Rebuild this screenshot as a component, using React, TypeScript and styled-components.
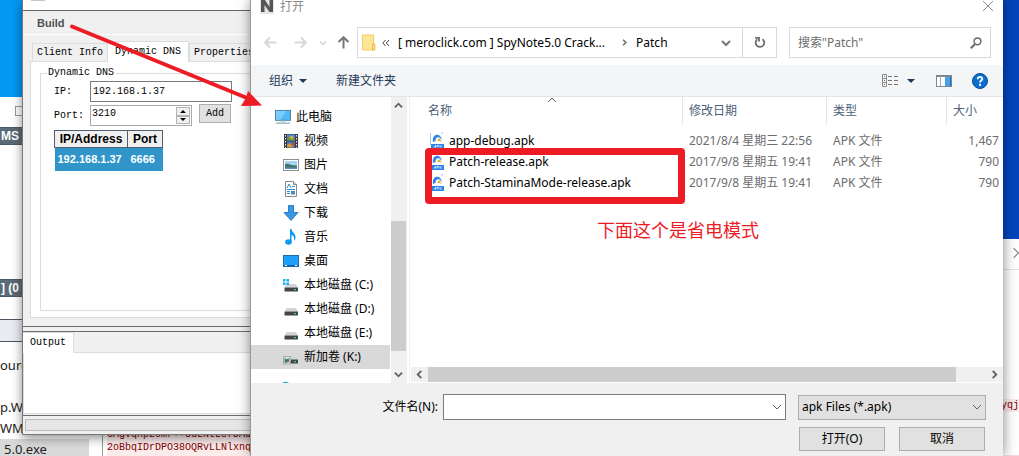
import React from 'react';
import styled, { createGlobalStyle } from 'styled-components';

const RED = '#ed1c24';
const UI_FONT = '"Noto Sans", "Noto Sans CJK SC", sans-serif';
const MONO_FONT = '"Liberation Mono", "Noto Sans CJK SC", monospace';

const GlobalStyle = createGlobalStyle`
  * { box-sizing: border-box; }
  body { margin: 0; font: 12px/16px ${UI_FONT}; color: #000; }
  button, input, select { font: inherit; color: inherit; margin: 0; padding: 0; border-radius: 0; outline: none; }
  svg { display: block; flex: none; }
`;

const Desktop = styled.main`
  position: relative;
  min-height: 100vh;
  overflow: hidden;
  background: linear-gradient(to right, #049af4 0, #0298f2 3%, #0447c4 90%, #0344bd 100%);
`;

/* ---------- windows at the back ---------- */

const LeftWindow = styled.section`
  position: absolute;
  left: 0;
  top: 97px;
  bottom: 0;
  width: 260px;
  background: #fff;
  display: flex;
  flex-direction: column;
  overflow: hidden;
`;

const CaptionStrip = styled.div`
  flex: none;
  height: 30px;
  padding: 9px 0 0 15px;
`;

const MaximizeBox = styled.div`
  width: 10px;
  height: 10px;
  border: 1px solid #999;
`;

const SlateHeader = styled.div`
  flex: none;
  height: 18px;
  padding-left: 1px;
  background: #5a6c78;
  border: solid #4a5a64;
  border-width: 1px 0;
  color: #fff;
  font: bold 12px/16px "Liberation Sans", sans-serif;
  white-space: pre;
`;

const Blank = styled.div<{ $h: number }>`
  flex: none;
  height: ${(p) => p.$h}px;
`;

const PaleBand = styled.div`
  flex: none;
  height: 23px;
  background: #e9edf1;
  border: solid #4d565e;
  border-width: 1px 0;
`;

const FileFragments = styled.div`
  flex: 1 1 0;
  min-height: 0;
  display: grid;
  grid-template-columns: 102px 1fr;
`;

const FragmentColumn = styled.div`
  display: flex;
  flex-direction: column;
  font-size: 13px;
  line-height: 20px;
  color: #222;
`;

const FragmentRow = styled.div<{ $selected?: boolean }>`
  flex: none;
  height: 21px;
  padding-left: ${(p) => (p.$selected ? 4 : 0)}px;
  margin-right: ${(p) => (p.$selected ? 13 : 0)}px;
  background: ${(p) => (p.$selected ? '#d9d9d9' : 'transparent')};
  white-space: nowrap;
`;

const CodeColumn = styled.div`
  border-left: 1px solid #999;
  padding: 86px 0 0 4px;
`;

const CodeLine = styled.div`
  height: 13px;
  background: #fbecec;
  color: #800000;
  font: 10px/13px ${MONO_FONT};
  white-space: nowrap;
`;

const CodeRest = styled.div`
  height: 13px;
  background: #fbecec;
`;

const RightWindow = styled.section`
  position: absolute;
  right: 0;
  top: 239px;
  bottom: 0;
  width: 24px;
  background: #fff;
  display: flex;
  flex-direction: column;
`;

const RightTitle = styled.div`
  height: 31px;
  padding: 8px 0 0 15px;
  border-bottom: 1px solid #e2e2e2;
  overflow: hidden;
`;

const RightCode = styled.div`
  flex: 1;
  display: flex;
  flex-direction: column;
  justify-content: space-between;
  align-items: flex-end;
  padding-top: 129px;
`;

const PinkEdge = styled.div`
  width: 16px;
  height: 1px;
  background: #fbdcdc;
`;

/* ---------- builder window ---------- */

const Builder = styled.section`
  position: absolute;
  left: 22px;
  top: 0;
  width: 300px;
  background: #f0f0f0;
  border: solid #777;
  border-width: 0 0 1px 1px;
  box-shadow: 0 3px 10px rgba(0, 0, 0, 0.45);
  font: 10px/12px ${MONO_FONT};
`;

const BuilderTitle = styled.div`
  height: 11px;
  padding-left: 8px;
  background: #fff;
  border-bottom: 1px solid #646464;
`;

const TitleGlyph = styled.div`
  width: 14px;
  height: 1px;
  background: #c4c4c4;
`;

const MenuBar = styled.nav`
  height: 24px;
  padding-left: 11px;
  border-bottom: 1px solid #fff;
`;

const MenuButton = styled.button`
  border: 0;
  padding: 0 3px;
  background: none;
  color: #505050;
  font: bold 11px/24px "Liberation Sans", sans-serif;
`;

const TabStrip = styled.div<{ $indent: number }>`
  display: flex;
  align-items: flex-end;
  padding-left: ${(p) => p.$indent}px;
`;

const Tab = styled.button<{ $active?: boolean }>`
  height: ${(p) => (p.$active ? 21 : 18)}px;
  margin-bottom: ${(p) => (p.$active ? -1 : 0)}px;
  padding: 0 ${(p) => (p.$active ? 7 : 4)}px;
  border: 1px solid #dcdcdc;
  border-bottom: 0;
  border-left-width: ${(p) => (p.$active ? 0 : 1)}px;
  background: ${(p) => (p.$active ? '#fff' : '#f0f0f0')};
  white-space: nowrap;
  position: relative;
`;

const BuilderTabs = styled.div`
  padding: 6px 0 8px 7px;
`;

const TabPage = styled.div`
  height: 257px;
  padding: 5px 0 7px 9px;
  border: 1px solid #dcdcdc;
  background: #fff;
`;

const GroupBox = styled.fieldset`
  height: 244px;
  margin: 0;
  padding: 2px 0 0 13px;
  border: 1px solid #dcdcdc;
  legend { margin-left: -7px; padding: 0 1px; }
`;

const Field = styled.div`
  display: flex;
  align-items: center;
  height: 21px;
  margin-bottom: 3px;
  label { width: 36px; }
`;

const AddressInput = styled.input`
  width: 142px;
  height: 21px;
  padding-left: 2px;
  border: 1px solid #7a7a7a;
`;

const Spinner = styled.div`
  display: flex;
  width: 102px;
  height: 21px;
  padding: 1px 1px 1px 0;
  border: 1px solid #a9a9a9;
  input { flex: 1; min-width: 0; border: 0; padding: 0 0 3px 1px; }
`;

const SpinButtons = styled.div`
  display: flex;
  flex-direction: column;
  width: 14px;
`;

const SpinButton = styled.button`
  flex: 1;
  min-height: 0;
  display: grid;
  place-items: center;
  border: 1px solid #b4b4b4;
  background: #f0f0f0;
`;

const AddButton = styled.button`
  width: 32px;
  height: 19px;
  margin: 0 0 4px 7px;
  border: 1px solid #adadad;
  background: #e1e1e1;
`;

const HostTable = styled.table`
  border-collapse: collapse;
  margin-top: 4px;
  font: bold 12px/16px "Liberation Sans", sans-serif;
  th { height: 17px; padding: 0; border: 1px solid #4d5f70; background: #f0f0f0; }
  td { height: 23px; padding: 0 0 0 3px; background: #3095c9; color: #fff; font-size: 11px; }
`;

const OutputArea = styled.div`
  border: solid #6a6a6a;
  border-width: 1px 0;
`;

const SplitLine = styled.div`
  height: 5px;
  border-top: 1px solid #6a6a6a;
`;

const OutputPage = styled.div`
  height: 62px;
  margin-bottom: 1px;
  border: 1px solid #dcdcdc;
  background: #fff;
`;

const StatusBar = styled.div`
  padding: 3px 0 3px 2px;
`;

const StatusTrack = styled.div`
  height: 12px;
  border: 1px solid #bcbcbc;
  background: #e6e6e6;
`;

/* ---------- open dialog ---------- */

const Dialog = styled.section`
  position: absolute;
  left: 251px;
  right: 16px;
  top: 0;
  bottom: 0;
  display: flex;
  flex-direction: column;
  background: #fff;
  box-shadow: -1px 0 0 #999, 0 0 12px rgba(0, 0, 0, 0.5);
`;

const TitleBar = styled.header`
  display: flex;
  align-items: flex-start;
  height: 27px;
  padding: 0 9px;
  color: #8a8a8a;
  line-height: 14px;
  h1 { flex: 1; margin: 0 0 0 6px; font: inherit; }
`;

const BareButton = styled.button`
  display: grid;
  place-items: center;
  border: 0;
  background: none;
`;

const AddressRow = styled.div`
  display: flex;
  align-items: center;
  padding-right: 12px;
  margin-bottom: 7px;
`;

const NavButtons = styled.div`
  display: flex;
  align-items: center;
  width: 106px;
  padding-left: 13px;
`;

const NavArrow = styled(BareButton)<{ $gap: number }>`
  margin-right: ${(p) => p.$gap}px;
`;

const AddressBox = styled.div`
  flex: 1;
  display: flex;
  align-items: center;
  height: 31px;
  padding-left: 4px;
  border: 1px solid #d9d9d9;
`;

const Crumbs = styled.div`
  flex: 1;
  display: flex;
  align-items: center;
  gap: 8px;
  padding-left: 6px;
  white-space: nowrap;
`;

const Crumb = styled.span`
  margin-right: 8px;
`;

const RefreshButton = styled(BareButton)`
  width: 34px;
  height: 29px;
  margin-left: 11px;
  border-left: 1px solid #d9d9d9;
`;

const SearchBox = styled.label`
  display: flex;
  align-items: center;
  width: 202px;
  height: 31px;
  margin-left: 12px;
  padding: 0 8px;
  border: 1px solid #d9d9d9;
  input { flex: 1; min-width: 0; border: 0; background: none; }
  input::placeholder { color: #6d6d6d; opacity: 1; }
`;

const Toolbar = styled.div`
  display: flex;
  align-items: center;
  height: 32px;
  padding: 0 15px 0 18px;
  border-bottom: 1px solid #e5e5e5;
  background: #f4f5f7;
  color: #1e395b;
`;

const ToolButton = styled.button`
  display: flex;
  align-items: center;
  gap: 6px;
  margin-right: 29px;
  border: 0;
  background: none;
`;

const ToolIcons = styled.div`
  display: flex;
  align-items: center;
  margin-left: auto;
`;

const IconButton = styled(BareButton)<{ $gap?: number }>`
  margin-left: ${(p) => p.$gap ?? 0}px;
`;

const Body = styled.div`
  flex: 1 1 0;
  min-height: 280px;
  display: flex;
  overflow: hidden;
`;

const Sidebar = styled.nav`
  width: 139px;
  padding-top: 8px;
  overflow: hidden;
`;

const PlaceLink = styled.a<{ $level?: number; $selected?: boolean }>`
  display: flex;
  align-items: center;
  gap: 5px;
  height: 24px;
  padding-left: ${(p) => 24 + (p.$level ?? 0) * 8}px;
  background: ${(p) => (p.$selected ? '#d9d9d9' : 'transparent')};
  color: #000;
  text-decoration: none;
  white-space: nowrap;
`;

const NextPlace = styled(PlaceLink)`
  align-items: flex-start;
  padding-top: 12px;
`;

const VScroll = styled.div`
  display: flex;
  flex-direction: column;
  width: 16px;
  margin-left: 1px;
  background: #f0f0f0;
`;

const VSpace = styled.div<{ $grow: number }>`
  flex: ${(p) => p.$grow} 1 0;
`;

const VThumb = styled.div`
  flex: 130 1 0;
  margin-right: 1px;
  background: #cdcdcd;
`;

const ScrollButton = styled(BareButton)<{ $w: number; $h: number }>`
  width: ${(p) => p.$w}px;
  height: ${(p) => p.$h}px;
  flex: none;
`;

const ListPane = styled.div`
  position: relative;
  flex: 1;
  min-width: 0;
  display: flex;
  flex-direction: column;
  margin-left: 2px;
  padding-left: 1px;
  border-left: 1px solid #f0f0f0;
`;

const SortMark = styled.div`
  position: absolute;
  left: 137px;
  top: -2px;
`;

const FileTable = styled.table`
  width: 100%;
  border-collapse: separate;
  border-spacing: 0;
  table-layout: fixed;
  color: #6d6d6d;
  white-space: nowrap;
  th { height: 28px; padding: 0 0 0 6px; border-right: 1px solid #e5e5e5; text-align: left; font-weight: normal; color: #4c607a; }
  th:first-child { padding-left: 17px; }
  th:last-child { border-right: 0; }
  td { height: 21px; padding: 0 0 0 6px; }
  td:first-child { padding-left: 19px; color: #000; }
  td:last-child { padding: 0 4px 0 0; text-align: right; }
  tbody::before { content: ""; display: block; height: 5px; }
`;

const FileName = styled.span`
  display: flex;
  align-items: center;
  gap: 5px;
`;

const HScroll = styled.div`
  display: flex;
  align-items: center;
  height: 16px;
  margin-top: auto;
  background: #f0f0f0;
  border-bottom: 1px solid #fff;
`;

const HThumb = styled.div`
  flex: 528 1 0;
  height: 15px;
  background: #cdcdcd;
`;

const HSpace = styled.div`
  flex: 30 1 0;
`;

const Footer = styled.footer`
  display: flex;
  flex-direction: column;
  gap: 7px;
  height: 73px;
  padding: 11px 17px 0 0;
  background: #f0f0f0;
`;

const FooterRow = styled.div`
  display: flex;
  align-items: center;
  justify-content: flex-end;
`;

const NameLabel = styled.label`
  width: 192px;
  padding-right: 5px;
  text-align: right;
`;

const Combo = styled.div`
  flex: 1;
  display: flex;
  height: 26px;
  padding-right: 3px;
  border: 1px solid #7a7a7a;
  background: #fff;
  input { flex: 1; min-width: 0; border: 0; padding-left: 4px; background: none; }
`;

const TypeSelect = styled.div`
  display: grid;
  width: 188px;
  margin-left: 12px;
  align-items: center;
  > * { grid-area: 1 / 1; }
  select { appearance: none; height: 25px; padding-left: 3px; border: 1px solid #adadad; background: #e1e1e1; }
  svg { justify-self: end; margin-right: 4px; pointer-events: none; }
`;

const PushButton = styled.button`
  width: 86px;
  height: 24px;
  margin: 0 1px 0 13px;
  border: 1px solid #adadad;
  background: #e1e1e1;
`;

/* ---------- annotations ---------- */

const ArrowMark = styled.svg`
  position: absolute;
  left: 60px;
  top: 15px;
  pointer-events: none;
`;

const HighlightBox = styled.div`
  position: absolute;
  left: 425px;
  top: 148px;
  width: 260px;
  height: 56px;
  border: 7px solid ${RED};
  border-radius: 4px;
  pointer-events: none;
`;

const Note = styled.p`
  position: absolute;
  left: 597px;
  top: 218px;
  margin: 0;
  color: ${RED};
  font-size: 18px;
  line-height: 24px;
  white-space: nowrap;
`;

/* ---------- icons ---------- */

type ChevronProps = { dir: 'up' | 'down' | 'left' | 'right'; size?: number; color?: string; weight?: number };

const chevronPath = {
  up: 'M1 7 5 3 9 7',
  down: 'M1 3 5 7 9 3',
  left: 'M7 1 3 5 7 9',
  right: 'M3 1 7 5 3 9',
};

const Chevron = ({ dir, size = 10, color = '#606060', weight = 2 }: ChevronProps) => (
  <svg width={size} height={size} viewBox="0 0 10 10" fill="none" stroke={color} strokeWidth={weight}>
    <path d={chevronPath[dir]} />
  </svg>
);

const Triangle = ({ up, w, color }: { up?: boolean; w: number; color: string }) => (
  <svg width={w} height={w / 2} viewBox="0 0 8 4" fill={color}>
    <path d={up ? 'M0 4 4 0 8 4Z' : 'M0 0H8L4 4Z'} />
  </svg>
);

const Arrow = ({ rotate, color, weight }: { rotate: number; color: string; weight: number }) => (
  <svg width="13" height="13" viewBox="0 0 13 13" fill="none" stroke={color} strokeWidth={weight}>
    <path transform={`rotate(${rotate} 6.5 6.5)`} d="M12.500 6.500H1.500M6 1.500 1.200 6.500 6 11.500" />
  </svg>
);

const AppGlyph = () => (
  <svg width="14" height="14" viewBox="0 0 14 14">
    <rect width="14" height="14" fill="#e4e4e4" />
    <path d="M1 12V0H5L9.500 7V0H13V12H9.500L4.500 5V12Z" fill="#555" />
  </svg>
);

const FolderGlyph = () => (
  <svg width="14" height="17" viewBox="0 0 14 17">
    <path d="M.5 1H11.500V16H.5Z" fill="#ffe596" stroke="#f0cf60" />
    <path d="M10.500 10H12.800V16H10.500Z" fill="#ffe596" stroke="#e8b93c" />
  </svg>
);

const RefreshGlyph = () => (
  <svg width="12" height="13" viewBox="0 0 12 13" fill="none" stroke="#6f6f6f" strokeWidth="1.800">
    <path d="M8.500 3.200A4.300 4.300 0 1 1 3.300 3.300" />
    <path d="M1.200 1.800H5V5.500" />
  </svg>
);

const SearchGlyph = () => (
  <svg width="12" height="12" viewBox="0 0 12 12" fill="none" stroke="#6a6a6a">
    <circle cx="7.500" cy="4.300" r="3.400" strokeWidth="1.500" />
    <path d="M5 7 .8 11.200" strokeWidth="2" />
  </svg>
);

const ViewGlyph = () => (
  <svg width="17" height="13" viewBox="0 0 17 13" fill="none">
    <path d="M.5.500H4.500V12.500H.5ZM.5 4.500H4.500M.5 8.500H4.500" stroke="#8b8b8b" />
    <path d="M6 2.500H10M12 2.500H16M6 6.500H10M12 6.500H16M6 10.500H10M12 10.500H16" stroke="#777" />
    <path d="M2 2h1v1H2z" fill="#3a8fd8" />
    <path d="M2 6h1v1H2z" fill="#4a9a5a" />
    <path d="M2 10h1v1H2z" fill="#d04040" />
  </svg>
);

const PaneGlyph = () => (
  <svg width="16" height="12" viewBox="0 0 16 12">
    <rect x=".5" y=".5" width="15" height="11" fill="#fff" stroke="#7b8894" />
    <path d="M0 0H16V2H0Z" fill="#7b8894" />
    <path d="M4.500 1V11" stroke="#9aa6b0" />
    <path d="M9 2H15V11H9Z" fill="#4aa0e8" />
    <path d="M14 2H15V11H14Z" fill="#1d6fb8" />
  </svg>
);

const HelpGlyph = () => (
  <svg width="16" height="16" viewBox="0 0 16 16">
    <circle cx="8" cy="8" r="7.500" fill="#0a6fd0" stroke="#0a4a90" />
    <path d="M5.800 6.200C5.800 3.200 10.300 3.300 10.300 6 10.300 7.600 8 7.600 8 9.500" fill="none" stroke="#fff" strokeWidth="1.800" />
    <rect x="7" y="10.800" width="2" height="2" fill="#fff" />
  </svg>
);

const ComputerGlyph = () => (
  <svg width="16" height="16" viewBox="0 0 17 16">
    <rect x=".5" y="1" width="16" height="10.500" fill="#52b9f8" stroke="#4a7f9e" />
    <path d="M1 1.500H12L6 11H1Z" fill="#7accfb" />
    <path d="M6 12H11V13.500H6Z" fill="#c5d5de" />
    <path d="M1 14.500H16" stroke="#6f94aa" />
  </svg>
);

const VideoGlyph = () => (
  <svg width="16" height="16" viewBox="0 0 16 16">
    <rect x="1" y="1" width="14" height="14" fill="#3c3c3c" />
    <path d="M2.500 2V15M13.500 2V15" stroke="#e8e8e8" strokeDasharray="1.500 1.500" />
    <rect x="4" y="1.500" width="8" height="6" fill="#4d8be0" />
    <rect x="4" y="8.500" width="8" height="6" fill="#3f74cf" />
    <path d="M4 5 8 3 12 6V7.500H4Z" fill="#5f9a3e" />
    <circle cx="8.500" cy="4.500" r="1.700" fill="#e8a52c" />
    <path d="M4 12 7 10 11 14.500H4Z" fill="#d39b3a" />
    <circle cx="10" cy="11" r="1.500" fill="#c8452e" />
  </svg>
);

const PictureGlyph = () => (
  <svg width="16" height="16" viewBox="0 0 16 16">
    <rect x=".5" y="2.500" width="15" height="11" fill="#fff" stroke="#8f8f8f" />
    <rect x="2" y="4" width="12" height="8" fill="#a5d3f5" />
    <path d="M2 7C6 6 8 9 14 8.500V12H2Z" fill="#3f7468" />
    <path d="M2 10.500H14V12H2Z" fill="#5d8fc0" />
  </svg>
);

const DocumentGlyph = () => (
  <svg width="16" height="16" viewBox="0 0 16 16">
    <path d="M2.500.5H10.500L13.500 3.500V15.500H2.500Z" fill="#fff" stroke="#8a8a8a" />
    <path d="M10.500.5V3.500H13.500" fill="#ddd" stroke="#8a8a8a" />
    <path d="M4 7 6 3 8 7M9 5.500H12M4 8.500H12M4 10.500H7M4 12.500H7" fill="none" stroke="#2b8fd0" />
    <rect x="8" y="10" width="4" height="3.500" fill="#4f88bb" />
  </svg>
);

const DownloadGlyph = () => (
  <svg width="16" height="16" viewBox="0 0 16 16">
    <path d="M5.500.5H10.500V7.500H15L8 15.500 1 7.500H5.500Z" fill="#3b97e3" stroke="#2b7fc8" />
  </svg>
);

const MusicGlyph = () => (
  <svg width="16" height="16" viewBox="0 0 16 16" fill="#0a9bf0">
    <path d="M7 0H8.500C9 3.500 13 4.500 12.500 9 12 10.500 11.500 11 11 11.500 11.500 8 10.500 6.500 8.500 6V13H7Z" />
    <ellipse cx="5.500" cy="13" rx="3.300" ry="2.700" />
  </svg>
);

const DesktopGlyph = () => (
  <svg width="16" height="16" viewBox="0 0 16 16">
    <rect x=".5" y="2.500" width="15" height="11" fill="#1ea0fb" stroke="#1b6fb0" />
    <path d="M1 12.500H15" stroke="#0b5fa6" />
    <path d="M2 12.500H4M12 12.500H14" stroke="#fff" />
  </svg>
);

const DriveGlyph = ({ system, photo }: { system?: boolean; photo?: boolean }) => (
  <svg width="16" height="16" viewBox="0 0 16 16">
    <path d="M3.500 7H13L15 10.500H1.500Z" fill="#d2d5d8" />
    <rect x="1.500" y="10.500" width="13.500" height="4" rx=".5" fill="#40464a" />
    <rect x="11" y="12" width="2" height="1.200" fill="#4be04b" />
    {system && <path d="M0 2H2.500V4.500H0ZM3.500 2H6V4.500H3.500ZM0 5.500H2.500V8H0ZM3.500 5.500H6V8H3.500Z" fill="#12b0f2" />}
    {photo && (
      <>
        <rect x=".5" y="7.500" width="7" height="7.500" fill="#dfe6e2" stroke="#a8a8a8" />
        <path d="M1.500 9 4 10 6.500 9V11L4 14H1.500Z" fill="#4c8f86" />
        <path d="M2 12 5 11 6.500 13.500" fill="none" stroke="#775040" />
      </>
    )}
  </svg>
);

const NetworkGlyph = () => (
  <svg width="16" height="3" viewBox="0 0 16 3">
    <path d="M-2 3C0 0 5 0 7 3Z" fill="#2b9fc4" />
  </svg>
);

const ApkGlyph = () => (
  <svg width="14" height="17" viewBox="0 0 14 17">
    <path d="M.5 1V13" stroke="#9cc9f5" />
    <path d="M3 10C1.500 1.500 10.500 0 12 8L9.500 5.500C7 4.500 5.500 6.500 5.500 9Z" fill="#2d84ea" />
    <path d="M7 9 9 6 12 10 10 9Z" fill="#f5a623" />
    <path d="M11.500 1.500 12.500.500" stroke="#2d84ea" />
    <rect x="1" y="12" width="13" height="5" fill="#2d84ea" />
    <path d="M4 15.500 5.500 13.500V15.500M7 15.500V13.500H8.500V14.500M10 13.500V15.500M11.500 13.500 10.500 14.500 11.500 15.500" stroke="#fff" fill="none" strokeWidth=".8" />
  </svg>
);

/* ---------- data ---------- */

const places = [
  { name: '视频', icon: <VideoGlyph /> },
  { name: '图片', icon: <PictureGlyph /> },
  { name: '文档', icon: <DocumentGlyph /> },
  { name: '下载', icon: <DownloadGlyph /> },
  { name: '音乐', icon: <MusicGlyph /> },
  { name: '桌面', icon: <DesktopGlyph /> },
  { name: '本地磁盘 (C:)', icon: <DriveGlyph system /> },
  { name: '本地磁盘 (D:)', icon: <DriveGlyph /> },
  { name: '本地磁盘 (E:)', icon: <DriveGlyph /> },
  { name: '新加卷 (K:)', icon: <DriveGlyph photo />, selected: true },
];

const files = [
  { name: 'app-debug.apk', date: '2021/8/4 星期三 22:56', size: '1,467' },
  { name: 'Patch-release.apk', date: '2017/9/8 星期五 19:41', size: '790' },
  { name: 'Patch-StaminaMode-release.apk', date: '2017/9/8 星期五 19:41', size: '790' },
];

/* ---------- sections ---------- */

const BackWindows = () => (
  <>
    <LeftWindow>
      <CaptionStrip><MaximizeBox /></CaptionStrip>
      <SlateHeader>MS</SlateHeader>
      <Blank $h={134} />
      <SlateHeader>] (0</SlateHeader>
      <Blank $h={22} />
      <PaleBand />
      <FileFragments>
        <FragmentColumn>
          <Blank $h={13} />
          <FragmentRow>ourc</FragmentRow>
          <Blank $h={21} />
          <FragmentRow>p.W</FragmentRow>
          <FragmentRow>WM</FragmentRow>
          <FragmentRow $selected>5.0.exe</FragmentRow>
        </FragmentColumn>
        <CodeColumn>
          <CodeLine>CAgvqhpzomr++5uLNtLefDAu</CodeLine>
          <CodeLine>2oBbqIDrDPO38OQRvLLNlxnq</CodeLine>
          <CodeRest />
        </CodeColumn>
      </FileFragments>
    </LeftWindow>
    <RightWindow>
      <RightTitle><Chevron dir="right" size={12} color="#888" weight={1} /></RightTitle>
      <RightCode>
        <CodeLine>yqj</CodeLine>
        <PinkEdge />
      </RightCode>
    </RightWindow>
  </>
);

const BuilderWindow = () => (
  <Builder>
    <BuilderTitle><TitleGlyph /></BuilderTitle>
    <MenuBar><MenuButton>Build</MenuButton></MenuBar>
    <BuilderTabs>
      <TabStrip $indent={2}>
        <Tab>Client Info</Tab>
        <Tab $active>Dynamic DNS</Tab>
        <Tab>Properties</Tab>
      </TabStrip>
      <TabPage>
        <GroupBox>
          <legend>Dynamic DNS</legend>
          <Field>
            <label htmlFor="ip">IP:</label>
            <AddressInput id="ip" defaultValue="192.168.1.37" />
          </Field>
          <Field>
            <label htmlFor="port">Port:</label>
            <Spinner>
              <input id="port" defaultValue="3210" />
              <SpinButtons>
                <SpinButton aria-label="Increase"><Triangle up w={6} color="#000" /></SpinButton>
                <SpinButton aria-label="Decrease"><Triangle w={6} color="#000" /></SpinButton>
              </SpinButtons>
            </Spinner>
            <AddButton>Add</AddButton>
          </Field>
          <HostTable>
            <colgroup><col width="73" /><col width="35" /></colgroup>
            <thead><tr><th>IP/Address</th><th>Port</th></tr></thead>
            <tbody><tr><td>192.168.1.37</td><td>6666</td></tr></tbody>
          </HostTable>
        </GroupBox>
      </TabPage>
    </BuilderTabs>
    <SplitLine />
    <OutputArea>
      <TabStrip $indent={0}><Tab $active>Output</Tab></TabStrip>
      <OutputPage />
    </OutputArea>
    <StatusBar><StatusTrack /></StatusBar>
  </Builder>
);

const OpenDialog = () => (
  <Dialog role="dialog" aria-label="打开">
    <TitleBar>
      <AppGlyph />
      <h1>打开</h1>
      <BareButton aria-label="关闭">
        <svg width="12" height="12" viewBox="0 0 12 12" stroke="#8a8a8a"><path d="M1 1 11 11M11 1 1 11" /></svg>
      </BareButton>
    </TitleBar>
    <AddressRow>
      <NavButtons>
        <NavArrow $gap={17} aria-label="后退"><Arrow rotate={0} color="#d8d8d8" weight={2} /></NavArrow>
        <NavArrow $gap={12} aria-label="前进"><Arrow rotate={180} color="#d8d8d8" weight={2} /></NavArrow>
        <NavArrow $gap={10} aria-label="最近的位置"><Chevron dir="down" size={8} color="#d8d8d8" /></NavArrow>
        <NavArrow $gap={0} aria-label="上移"><Arrow rotate={90} color="#777" weight={2} /></NavArrow>
      </NavButtons>
      <AddressBox>
        <FolderGlyph />
        <Crumbs>
          <svg width="8" height="8" viewBox="0 0 8 8" fill="none" stroke="#444"><path d="M3.500 1 .8 4 3.500 7M7 1 4.300 4 7 7" /></svg>
          <Crumb>[ meroclick.com ] SpyNote5.0 Crack...</Crumb>
          <Chevron dir="right" size={7} color="#666" />
          <Crumb>Patch</Crumb>
        </Crumbs>
        <BareButton aria-label="上一个位置"><Chevron dir="down" color="#777" /></BareButton>
        <RefreshButton aria-label="刷新"><RefreshGlyph /></RefreshButton>
      </AddressBox>
      <SearchBox>
        <input placeholder={'搜索"Patch"'} aria-label="搜索" />
        <SearchGlyph />
      </SearchBox>
    </AddressRow>
    <Toolbar>
      <ToolButton>组织<Triangle w={8} color="#1e395b" /></ToolButton>
      <ToolButton>新建文件夹</ToolButton>
      <ToolIcons>
        <IconButton aria-label="视图"><ViewGlyph /></IconButton>
        <IconButton $gap={8} aria-label="更多选项"><Triangle w={8} color="#1e395b" /></IconButton>
        <IconButton $gap={21} aria-label="预览窗格"><PaneGlyph /></IconButton>
        <IconButton $gap={20} aria-label="帮助"><HelpGlyph /></IconButton>
      </ToolIcons>
    </Toolbar>
    <Body>
      <Sidebar>
        <PlaceLink href="#pc"><ComputerGlyph />此电脑</PlaceLink>
        {places.map((p) => (
          <PlaceLink key={p.name} href="#place" $level={1} $selected={p.selected}>{p.icon}{p.name}</PlaceLink>
        ))}
        <NextPlace href="#network" aria-label="网络" $level={1}><NetworkGlyph /></NextPlace>
      </Sidebar>
      <VScroll>
        <ScrollButton $w={15} $h={17} aria-label="向上滚动"><Chevron dir="up" size={9} /></ScrollButton>
        <VSpace $grow={107} />
        <VThumb />
        <VSpace $grow={15} />
        <ScrollButton $w={15} $h={17} aria-label="向下滚动"><Chevron dir="down" size={9} /></ScrollButton>
      </VScroll>
      <ListPane>
        <SortMark><Chevron dir="up" color="#666" weight={1} /></SortMark>
        <FileTable>
          <colgroup><col /><col width="144" /><col width="120" /><col width="56" /></colgroup>
          <thead><tr><th>名称</th><th>修改日期</th><th>类型</th><th>大小</th></tr></thead>
          <tbody>
            {files.map((f) => (
              <tr key={f.name}>
                <td><FileName><ApkGlyph />{f.name}</FileName></td>
                <td>{f.date}</td>
                <td>APK 文件</td>
                <td>{f.size}</td>
              </tr>
            ))}
          </tbody>
        </FileTable>
        <HScroll>
          <ScrollButton $w={17} $h={15} aria-label="向左滚动"><Chevron dir="left" size={9} /></ScrollButton>
          <HThumb />
          <HSpace />
          <ScrollButton $w={17} $h={15} aria-label="向右滚动"><Chevron dir="right" size={9} /></ScrollButton>
        </HScroll>
      </ListPane>
    </Body>
    <Footer>
      <FooterRow>
        <NameLabel htmlFor="filename">文件名(N):</NameLabel>
        <Combo>
          <input id="filename" />
          <BareButton aria-label="显示列表"><Chevron dir="down" weight={1} /></BareButton>
        </Combo>
        <TypeSelect>
          <select aria-label="文件类型"><option>apk Files (*.apk)</option></select>
          <Chevron dir="down" weight={1} />
        </TypeSelect>
      </FooterRow>
      <FooterRow>
        <PushButton>打开(O)</PushButton>
        <PushButton>取消</PushButton>
      </FooterRow>
    </Footer>
  </Dialog>
);

export default function App() {
  return (
    <>
      <GlobalStyle />
      <Desktop>
        <BackWindows />
        <BuilderWindow />
        <OpenDialog />
        <ArrowMark width="210" height="100" viewBox="60 15 210 100" aria-hidden="true">
          <path d="M72 26.500 247 98" stroke={RED} strokeWidth="4" strokeLinecap="round" />
          <path d="M262 105.500 241 106 246 98 248 91Z" fill={RED} />
        </ArrowMark>
        <HighlightBox />
        <Note>下面这个是省电模式</Note>
      </Desktop>
    </>
  );
}
